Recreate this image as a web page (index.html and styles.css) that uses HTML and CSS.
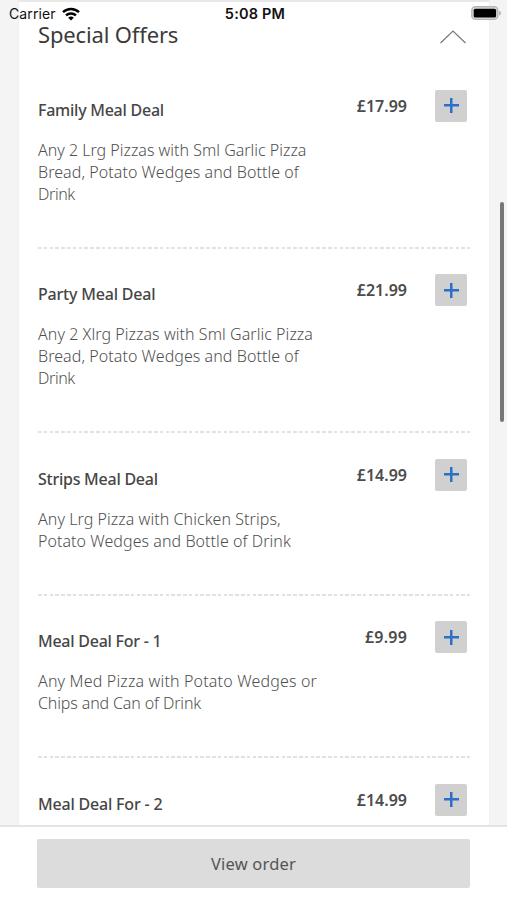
FILE: index.html
```html
<!DOCTYPE html>
<html lang="en">
<head>
<meta charset="utf-8">
<title>Special Offers</title>
<link rel="stylesheet" href="styles.css">
</head>
<body>
<div class="screen">
  <div class="status">
    <div class="network"><span class="carrier">Carrier</span>
      <svg class="wifi" width="18" height="14" viewBox="0 0 18 14" fill="none" stroke="#000" stroke-width="2.500"><path d="M1 5.200a11.500 11.500 0 0 1 16 0M4 8.400a7.200 7.200 0 0 1 10 0"/><path d="M9 13.600 6.200 10.800a4 4 0 0 1 5.600 0z" fill="#000" stroke="none"/></svg>
    </div>
    <span class="time">5:08 PM</span>
    <svg class="battery" width="31" height="15" viewBox="0 0 31 15"><rect x="1.800" y=".8" width="26" height="12.600" rx="3.600" fill="#ddd" stroke="#b5b5b5" stroke-width="1.400"/><rect x="3.700" y="2.700" width="22.400" height="8.900" rx="1.600"/><path d="M29.200 5c2.200.6 2.200 3.800 0 4.400z" fill="#aaa"/></svg>
  </div>
  <main class="content">
    <section class="card">
      <header class="heading"><h1>Special Offers</h1>
        <svg class="chevron" width="28" height="16" viewBox="0 0 28 16" fill="none" stroke="#777" stroke-width="1.200"><path d="M1.500 14 14 2l12.500 12"/></svg>
      </header>
      <article class="item">
        <div class="info"><h2 class="t1">Family Meal Deal</h2><p><span>Any 2 Lrg Pizzas with Sml Garlic Pizza</span><span class="d2">Bread, Potato Wedges and Bottle of</span><span class="d3">Drink</span></p></div>
        <span class="price">£17.99</span><button class="add" aria-label="Add"></button>
      </article>
      <article class="item">
        <div class="info"><h2 class="t2">Party Meal Deal</h2><p><span class="d2">Any 2 Xlrg Pizzas with Sml Garlic Pizza</span><span class="d2">Bread, Potato Wedges and Bottle of</span><span class="d3">Drink</span></p></div>
        <span class="price">£21.99</span><button class="add" aria-label="Add"></button>
      </article>
      <article class="item">
        <div class="info"><h2 class="t1">Strips Meal Deal</h2><p><span class="d2">Any Lrg Pizza with Chicken Strips,</span><span class="d2">Potato Wedges and Bottle of Drink</span></p></div>
        <span class="price">£14.99</span><button class="add" aria-label="Add"></button>
      </article>
      <article class="item">
        <div class="info"><h2 class="t1">Meal Deal For - 1</h2><p><span class="d7">Any Med Pizza with Potato Wedges or</span><span class="d8">Chips and Can of Drink</span></p></div>
        <span class="price wide">£9.99</span><button class="add" aria-label="Add"></button>
      </article>
      <article class="item">
        <div class="info"><h2 class="t2">Meal Deal For - 2</h2></div>
        <span class="price">£14.99</span><button class="add" aria-label="Add"></button>
      </article>
    </section>
    <div class="scrollbar"></div>
  </main>
  <footer class="footer"><button class="order">View order</button></footer>
</div>
</body>
</html>
```
FILE: styles.css
```css
* { box-sizing: border-box; }
body { margin: 0; font-family: "Noto Sans", "Open Sans", sans-serif; }
.screen { position: relative; width: 507px; height: 900px; display: flex; flex-direction: column; overflow: hidden; background: #fff; }
.status { position: absolute; z-index: 2; top: 0; left: 0; width: 507px; height: 27px; padding: 0 6px 0 9px; display: grid; grid-template-columns: 1fr auto 1fr; align-items: center; color: #111; font: 14px/27px Inter, "Liberation Sans", sans-serif; }
.network { display: flex; align-items: center; gap: 6px; }
.carrier { letter-spacing: .1px; }
.time { font-weight: 600; font-size: 14.500px; letter-spacing: .2px; }
.battery { justify-self: end; }
.content { position: relative; height: 825px; padding: 0 17px 0 18px; background: #f4f4f4; overflow: hidden; }
.card { height: 825px; overflow: hidden; background: #fff; border: 1px solid #f0f0f0; border-top: 2px solid #e8e8e8; border-bottom: 0; padding: 0 19px; }
.heading { height: 62px; display: flex; justify-content: space-between; padding: 15px 3px 0 0; }
.heading h1 { margin: 0; font: 400 22px/34px "Noto Sans", sans-serif; color: #3b3b3b; letter-spacing: -.15px; }
.chevron { margin-top: 12px; }
.item { display: flex; align-items: flex-start; padding: 25.500px 3px 44px 0; background: repeating-linear-gradient(90deg, #e2e2e2 0 3.600px, transparent 3.600px 5.800px) 0 100% / 432px 2px no-repeat; }
.info { flex: 1; padding-top: 8px; white-space: nowrap; }
h2 { margin: 0 0 17px; font-size: 16px; line-height: 24px; font-weight: 500; color: #464646; }
.t1 { letter-spacing: -.25px; }
.t2 { letter-spacing: -.19px; }
p { margin: 0; font-size: 16px; line-height: 22px; font-weight: 300; color: #505050; }
p span { display: table; }
.d2 { letter-spacing: .06px; }
.d3 { letter-spacing: -.4px; }
.d7 { letter-spacing: .17px; }
.d8 { letter-spacing: -.13px; }
.price { font-size: 16px; line-height: 32px; font-weight: 600; color: #4c4c4c; margin-right: 28px; }
.wide { letter-spacing: .2px; }
.add { width: 32px; height: 32px; flex: none; border: 0; padding: 0; border-radius: 2px; background: linear-gradient(#2b6fc9, #2b6fc9) center / 15px 2.500px no-repeat, linear-gradient(#2b6fc9, #2b6fc9) center / 2.500px 15px no-repeat, #d0d0d0; }
.scrollbar { position: absolute; top: 202px; right: 3px; width: 4px; height: 220px; border-radius: 2px; background: #777; }
.footer { flex: 1; border-top: 2px solid #e4e4e4; padding: 12px 37px 0; background: #fff; }
.order { display: block; width: 433px; height: 49px; border: 0; border-radius: 2px; background: #dcdcdc; color: #555; font: 400 16.500px "Noto Sans", sans-serif; letter-spacing: .2px; }
```
